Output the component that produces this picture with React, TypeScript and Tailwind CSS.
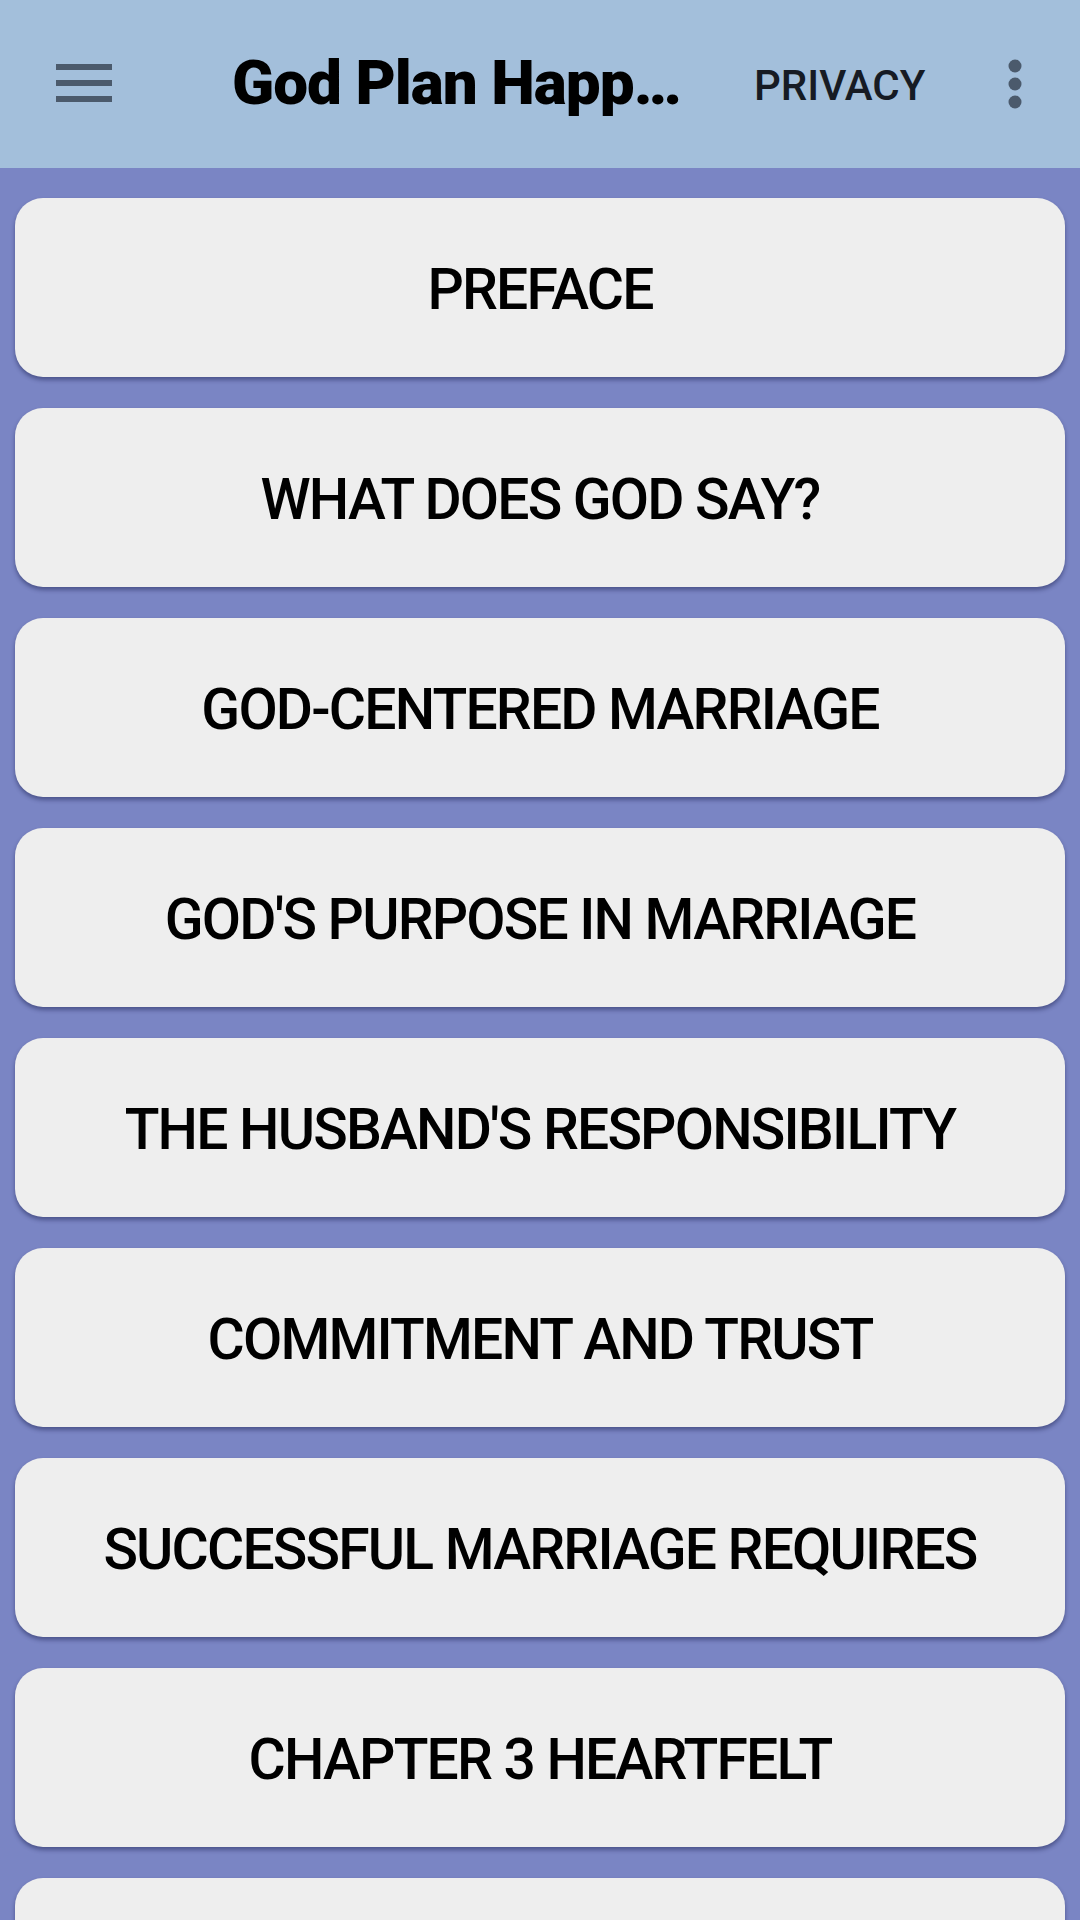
const ITEMS = [
  "PREFACE",
  "WHAT DOES GOD SAY?",
  "GOD-CENTERED MARRIAGE",
  "GOD'S PURPOSE IN MARRIAGE",
  "THE HUSBAND'S RESPONSIBILITY",
  "COMMITMENT AND TRUST",
  "SUCCESSFUL MARRIAGE REQUIRES",
  "CHAPTER 3 HEARTFELT",
  "",
];

function MenuIcon() {
  return (
    <svg width="56" height="40" viewBox="0 0 56 40" fill="#4b5a6c">
      <rect x="0" y="0" width="56" height="6" />
      <rect x="0" y="16" width="56" height="6" />
      <rect x="0" y="32" width="56" height="6" />
    </svg>
  );
}

function MoreIcon() {
  return (
    <svg width="14" height="50" viewBox="0 0 14 50" fill="#4b5a6c">
      <circle cx="7" cy="7" r="6.5" />
      <circle cx="7" cy="25" r="6.5" />
      <circle cx="7" cy="43" r="6.5" />
    </svg>
  );
}

export default function App() {
  return (
    <div
      className="w-[1080px] h-[1920px] overflow-hidden flex flex-col bg-[#7a85c4]"
      style={{ fontFamily: "Roboto, 'Liberation Sans', sans-serif" }}
    >
      {/* Toolbar */}
      <header className="h-[168px] shrink-0 bg-[#a3bfdb] flex items-center">
        <div className="w-[56px] ml-[56px] flex items-center">
          <MenuIcon />
        </div>
        <h1 className="ml-[120px] w-[450px] text-[62px] font-black text-black tracking-[-1px] leading-none whitespace-nowrap pb-[2px]">
          God Plan Happ…
        </h1>
        <span className="ml-[72px] w-[170px] text-[42px] font-medium text-[#161b24] leading-none pt-[4px]">
          PRIVACY
        </span>
        <div className="ml-[84px] flex items-center">
          <MoreIcon />
        </div>
      </header>

      {/* Chapter list */}
      <main className="flex flex-col gap-[31px] px-[15px] pt-[30px]">
        {ITEMS.map((t, i) => (
          <button
            key={i}
            className="h-[179px] shrink-0 w-full rounded-[28px] bg-[#eeeeee] shadow-[0_3px_4px_rgba(20,25,70,0.45)] flex items-center justify-center pt-[4px]"
          >
            {t && (
              <span className="text-[57px] font-medium text-black tracking-[-1.8px] leading-none whitespace-nowrap">
                {t}
              </span>
            )}
          </button>
        ))}
      </main>
    </div>
  );
}
